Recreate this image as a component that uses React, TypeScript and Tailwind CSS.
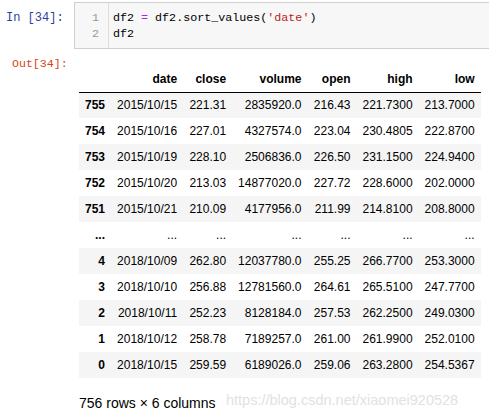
import React from 'react'

type Row = [string, string, string, string, string, string, string]

const COLUMNS = ['', 'date', 'close', 'volume', 'open', 'high', 'low']
const WIDTHS = ['w-[32px]', 'w-[72px]', 'w-[49px]', 'w-[75px]', 'w-[49px]', 'w-[62px]', 'w-[62px]']

const ROWS: Row[] = [
  ['755', '2015/10/15', '221.31', '2835920.0', '216.43', '221.7300', '213.7000'],
  ['754', '2015/10/16', '227.01', '4327574.0', '223.04', '230.4805', '222.8700'],
  ['753', '2015/10/19', '228.10', '2506836.0', '226.50', '231.1500', '224.9400'],
  ['752', '2015/10/20', '213.03', '14877020.0', '227.72', '228.6000', '202.0000'],
  ['751', '2015/10/21', '210.09', '4177956.0', '211.99', '214.8100', '208.8000'],
  ['...', '...', '...', '...', '...', '...', '...'],
  ['4', '2018/10/09', '262.80', '12037780.0', '255.25', '266.7700', '253.3000'],
  ['3', '2018/10/10', '256.88', '12781560.0', '264.61', '265.5100', '247.7700'],
  ['2', '2018/10/11', '252.23', '8128184.0', '257.53', '262.2500', '249.0300'],
  ['1', '2018/10/12', '258.78', '7189257.0', '261.00', '261.9900', '252.0100'],
  ['0', '2018/10/15', '259.59', '6189026.0', '259.06', '263.2800', '254.5367'],
]

const mono = "font-['Liberation_Mono',monospace]"

export default function App() {
  return (
    <div className="relative w-[489px] h-[415px] overflow-hidden bg-white text-black font-['Liberation_Sans',Arial,sans-serif]">
      {/* Input cell */}
      <div className="flex items-start pt-[2px]">
        <div className={`w-[74px] pl-[6px] pt-[8px] text-[12px] leading-[16px] text-[#303F9F] ${mono}`}>In&nbsp;[34]:</div>
        <div className="flex-1 flex h-[47px] border-y border-l border-[#cfcfcf] bg-[#f7f7f7]">
          <div className={`w-[34px] border-r border-[#dddddd] pt-[7px] pr-[9px] text-right text-[11.7px] leading-[16px] text-[#999999] ${mono}`}>
            <div>1</div>
            <div>2</div>
          </div>
          <div className={`pl-[4px] pt-[7px] text-[11.7px] leading-[16px] whitespace-pre ${mono}`}>
            <div>
              df2 <span className="text-[#AA22FF]">=</span> df2.sort_values(<span className="text-[#BA2121]">'date'</span>)
            </div>
            <div>df2</div>
          </div>
        </div>
      </div>

      {/* Output cell */}
      <div className="flex items-start mt-[6px]">
        <div className={`w-[79px] pl-[12px] pt-[1px] text-[11.6px] leading-[16px] text-[#D84315] ${mono}`}>Out[34]:</div>
        <div className="pt-[11px]">
          <table className="border-collapse text-[12px] leading-[14px] table-fixed">
            <thead>
              <tr className="h-[26px] border-b border-black">
                {COLUMNS.map((c, i) => (
                  <th key={i} className={`${WIDTHS[i]} px-[6px] text-right font-bold align-middle`}>{c}</th>
                ))}
              </tr>
            </thead>
            <tbody>
              {ROWS.map((r, ri) => (
                <tr key={ri} className={`h-[26px] ${ri % 2 === 0 ? 'bg-[#f5f5f5]' : 'bg-white'}`}>
                  {r.map((v, ci) => (
                    <td key={ci} className={`px-[6px] text-right align-middle whitespace-nowrap ${ci === 0 ? 'font-bold' : ''}`}>{v}</td>
                  ))}
                </tr>
              ))}
            </tbody>
          </table>
          <div className="mt-[17px] text-[14px] leading-[16px]">756 rows × 6 columns</div>
        </div>
      </div>

      {/* watermark */}
      <div className="absolute left-[226px] top-[392px] text-[14.5px] leading-[16px] text-[#e2e2e2] whitespace-nowrap select-none">
        https://blog.csdn.net/xiaomei920528
      </div>
    </div>
  )
}
